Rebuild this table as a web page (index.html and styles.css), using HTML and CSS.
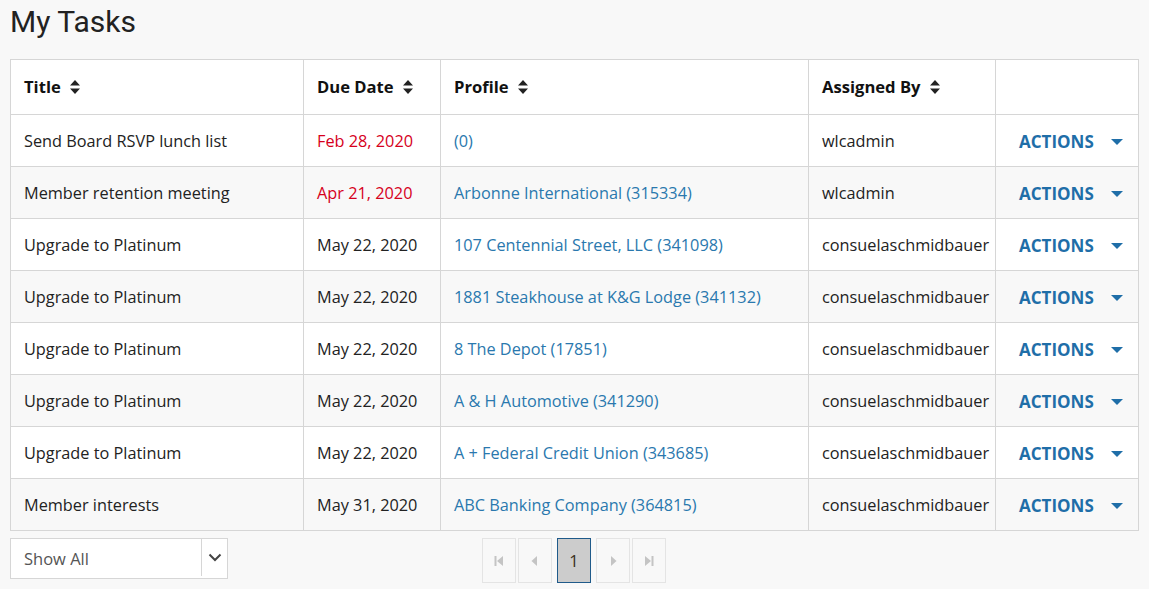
FILE: index.html
```html
<!DOCTYPE html>
<html>
<head>
<meta charset="utf-8">
<link rel="stylesheet" href="styles.css">
</head>
<body>
<h1 class="page-title">My Tasks</h1>
<table class="tasks">
  <colgroup>
    <col style="width:293px"><col style="width:137px"><col style="width:368px"><col style="width:187px"><col>
  </colgroup>
  <thead>
    <tr>
      <th><span class="th-label">Title</span><svg class="sort" viewBox="0 0 10 14"><path d="M5 0L10 5.5H0Z M5 14L10 8.5H0Z"/></svg></th>
      <th><span class="th-label">Due Date</span><svg class="sort" viewBox="0 0 10 14"><path d="M5 0L10 5.5H0Z M5 14L10 8.5H0Z"/></svg></th>
      <th><span class="th-label">Profile</span><svg class="sort" viewBox="0 0 10 14"><path d="M5 0L10 5.5H0Z M5 14L10 8.5H0Z"/></svg></th>
      <th><span class="th-label">Assigned By</span><svg class="sort" viewBox="0 0 10 14"><path d="M5 0L10 5.5H0Z M5 14L10 8.5H0Z"/></svg></th>
      <th></th>
    </tr>
  </thead>
  <tbody>
    <tr><td>Send Board RSVP lunch list</td><td class="overdue">Feb 28, 2020</td><td><a href="#">(0)</a></td><td>wlcadmin</td><td class="act"><span class="actions">ACTIONS</span><span class="caret"></span></td></tr>
    <tr><td>Member retention meeting</td><td class="overdue">Apr 21, 2020</td><td><a href="#">Arbonne International (315334)</a></td><td>wlcadmin</td><td class="act"><span class="actions">ACTIONS</span><span class="caret"></span></td></tr>
    <tr><td>Upgrade to Platinum</td><td>May 22, 2020</td><td><a href="#">107 Centennial Street, LLC (341098)</a></td><td>consuelaschmidbauer</td><td class="act"><span class="actions">ACTIONS</span><span class="caret"></span></td></tr>
    <tr><td>Upgrade to Platinum</td><td>May 22, 2020</td><td><a href="#">1881 Steakhouse at K&amp;G Lodge (341132)</a></td><td>consuelaschmidbauer</td><td class="act"><span class="actions">ACTIONS</span><span class="caret"></span></td></tr>
    <tr><td>Upgrade to Platinum</td><td>May 22, 2020</td><td><a href="#">8 The Depot (17851)</a></td><td>consuelaschmidbauer</td><td class="act"><span class="actions">ACTIONS</span><span class="caret"></span></td></tr>
    <tr><td>Upgrade to Platinum</td><td>May 22, 2020</td><td><a href="#">A &amp; H Automotive (341290)</a></td><td>consuelaschmidbauer</td><td class="act"><span class="actions">ACTIONS</span><span class="caret"></span></td></tr>
    <tr><td>Upgrade to Platinum</td><td>May 22, 2020</td><td><a href="#">A + Federal Credit Union (343685)</a></td><td>consuelaschmidbauer</td><td class="act"><span class="actions">ACTIONS</span><span class="caret"></span></td></tr>
    <tr><td>Member interests</td><td>May 31, 2020</td><td><a href="#">ABC Banking Company (364815)</a></td><td>consuelaschmidbauer</td><td class="act"><span class="actions">ACTIONS</span><span class="caret"></span></td></tr>
  </tbody>
</table>
<div class="footer">
  <div class="select">
    <span class="select-label">Show All</span>
    <span class="select-btn"><svg viewBox="0 0 14 9" width="14" height="9"><path d="M1.5 1.5L7 7L12.5 1.5" fill="none" stroke="#444" stroke-width="2"/></svg></span>
  </div>
  <div class="pager">
    <span class="pg"><svg viewBox="0 0 10 12" width="10" height="12"><rect x="0.5" y="1" width="2" height="10" fill="#c4c4c4"/><path d="M9 1V11L3 6Z" fill="#c4c4c4"/></svg></span>
    <span class="pg"><svg viewBox="0 0 10 12" width="10" height="12"><path d="M7 1V11L1.5 6Z" fill="#c4c4c4"/></svg></span>
    <span class="pg active">1</span>
    <span class="pg"><svg viewBox="0 0 10 12" width="10" height="12"><path d="M3 1V11L8.5 6Z" fill="#c4c4c4"/></svg></span>
    <span class="pg"><svg viewBox="0 0 10 12" width="10" height="12"><path d="M1 1V11L7 6Z" fill="#c4c4c4"/><rect x="7.5" y="1" width="2" height="10" fill="#c4c4c4"/></svg></span>
  </div>
</div>
</body>
</html>
```
FILE: styles.css
```css
* { box-sizing: border-box; }
html, body { margin: 0; padding: 0; }
body {
  background: #f8f8f8;
  font-family: "Open Sans", "Noto Sans", sans-serif;
  color: #222;
  padding: 0 10px;
}
.page-title {
  margin: 0;
  padding-top: 4px;
  height: 59px;
  font-family: Roboto, "Noto Sans", sans-serif;
  font-weight: 400;
  font-size: 30px;
  line-height: 36px;
  color: #222;
}
.tasks {
  width: 1129px;
  border-collapse: collapse;
  table-layout: fixed;
  background: #fff;
  font-size: 16.3px;
}
.tasks th, .tasks td {
  border: 1px solid #d6d6d6;
  padding: 0 13px;
  text-align: left;
  white-space: nowrap;
  overflow: hidden;
}
.tasks th {
  height: 55px;
  font-weight: 700;
  color: #111;
  font-size: 16.6px;
  padding-bottom: 3px;
}
.th-label { vertical-align: middle; }
.sort {
  width: 10px;
  height: 14px;
  margin-left: 9px;
  vertical-align: middle;
  fill: #222;
}
.tasks td {
  height: 52px;
  color: #222;
  padding-top: 1px;
}
.tasks tbody tr:nth-child(even) td { background: #f8f8f8; }
.tasks td.overdue { color: #d6001c; }
.tasks a { color: #2a78ae; text-decoration: none; }
.tasks td.act { padding-left: 23px; }
.actions {
  color: #1f6ea8;
  font-weight: 700;
  font-size: 17px;
}
.caret {
  display: inline-block;
  width: 0; height: 0;
  border-left: 6px solid transparent;
  border-right: 6px solid transparent;
  border-top: 6px solid #1f6ea8;
  margin-left: 17px;
  vertical-align: 3px;
}
.footer {
  display: flex;
  align-items: flex-start;
  padding-top: 7px;
}
.select {
  display: flex;
  width: 218px;
  height: 41px;
  border: 1px solid #d6d6d6;
  background: #fff;
}
.select-label {
  flex: 1;
  padding-left: 13px;
  line-height: 39px;
  font-size: 16.5px;
  color: #555;
}
.select-btn {
  width: 26px;
  border-left: 1px solid #d6d6d6;
  margin: 0 0 2px 0;
  display: flex;
  align-items: center;
  justify-content: center;
}
.pager {
  display: flex;
  gap: 2px;
  margin-left: 254px;
}
.pg {
  width: 34px;
  height: 45px;
  border: 1px solid #e4e4e4;
  background: #f8f8f8;
  display: flex;
  align-items: center;
  justify-content: center;
  font-size: 16.5px;
  color: #444;
}
.pg.active {
  background: #cccccc;
  border: 1px solid #1f5a8a;
  margin: 0 3px;
  color: #3a3020;
}
```
